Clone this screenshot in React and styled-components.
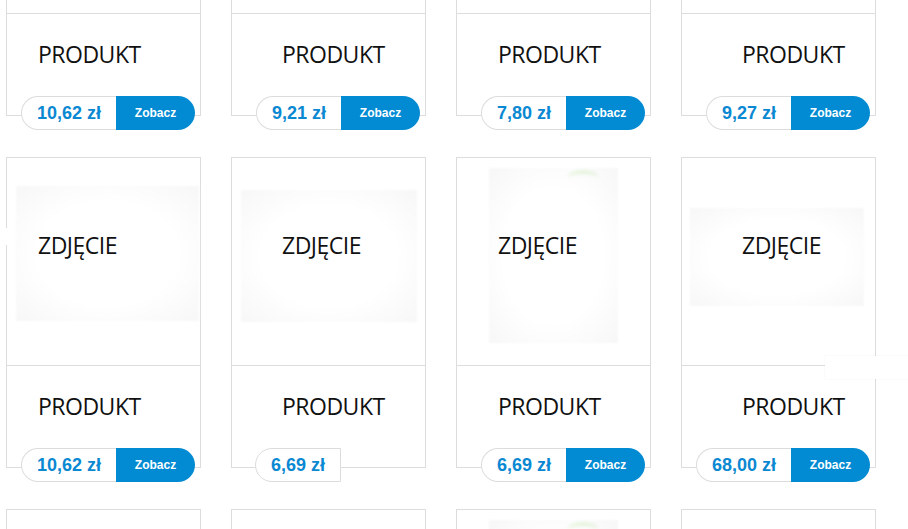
import React from "react";
import styled, { createGlobalStyle } from "styled-components";

const Global = createGlobalStyle`
  html, body { margin: 0; padding: 0; background: #fff; }
  body { overflow: hidden; width: 908px; height: 529px; position: relative; }
`;

const Page = styled.div`
  position: relative;
  width: 908px;
  height: 529px;
  overflow: hidden;
`;

const Grid = styled.div`
  display: grid;
  grid-template-columns: repeat(4, 195px);
  column-gap: 30px;
  row-gap: 41px;
  padding-left: 6px;
  margin-top: -195px;
`;

const Card = styled.div`
  display: flex;
  flex-direction: column;
  width: 195px;
  height: 311px;
  box-sizing: border-box;
  border: 1px solid #dddddd;
  background: #fff;
`;

const ImageArea = styled.div`
  position: relative;
  flex: 0 0 208px;
  height: 208px;
  box-sizing: border-box;
  border-bottom: 1px solid #dddddd;
  padding: 72px 0 0 ${(p) => p.$indent}px;
`;

const Photo = styled.div`
  position: absolute;
  left: ${(p) => p.$x}px;
  top: ${(p) => p.$y}px;
  width: ${(p) => p.$w}px;
  height: ${(p) => p.$h}px;
  background: radial-gradient(ellipse at center, #ffffff 55%, #f6f7f6 100%);
  filter: blur(1px);
`;

const Leaf = styled.div`
  position: absolute;
  right: 20px;
  top: 3px;
  width: 30px;
  height: 12px;
  border-radius: 50% 50% 0 0;
  border-top: 2px solid rgba(160, 220, 120, 0.45);
  filter: blur(1.5px);
`;

const Label = styled.div`
  position: relative;
  font-family: "Open Sans", "Noto Sans", sans-serif;
  font-size: 23px;
  line-height: 31px;
  letter-spacing: -0.5px;
  color: #111;
`;

const Info = styled.div`
  position: relative;
  flex: 1;
  padding: 25px 0 0 ${(p) => p.$indent}px;
`;

const PriceRow = styled.div`
  position: absolute;
  left: 0;
  right: 5px;
  bottom: -15px;
  display: grid;
  grid-template-columns: 1fr 79px;
  height: 34px;
`;

const PriceBox = styled.div`
  justify-self: end;
  display: flex;
  align-items: center;
  height: 34px;
  box-sizing: border-box;
  padding: 0 15px;
  border: 1px solid #dcdcdc;
  border-right: ${(p) => (p.$alone ? "1px solid #dcdcdc" : "none")};
  border-radius: 17px 0 0 17px;
  background: #fff;
  font-family: "Liberation Sans", Arial, sans-serif;
  font-weight: 700;
  font-size: 18px;
  color: #0b88d2;
  white-space: nowrap;
`;

const Button = styled.div`
  display: flex;
  align-items: center;
  justify-content: center;
  height: 34px;
  background: #028bd3;
  border-radius: 0 17px 17px 0;
  color: #fff;
  font-family: "Liberation Sans", Arial, sans-serif;
  font-weight: 700;
  font-size: 12px;
`;

const Patch = styled.div`
  position: absolute;
  left: ${(p) => p.$x}px;
  top: ${(p) => p.$y}px;
  width: ${(p) => p.$w}px;
  height: ${(p) => p.$h}px;
  background: #fff;
  box-shadow: ${(p) => (p.$shadow ? "0 0 1px rgba(0,0,0,0.1)" : "none")};
`;

const indents = [31, 50, 41, 60];
const photos = [
  { x: 9, y: 28, w: 183, h: 135 },
  { x: 9, y: 32, w: 176, h: 132 },
  { x: 32, y: 10, w: 129, h: 175 },
  { x: 8, y: 50, w: 174, h: 98 },
];

const rows = [
  [{ p: "10,62 zł" }, { p: "9,21 zł" }, { p: "7,80 zł" }, { p: "9,27 zł" }],
  [{ p: "10,62 zł" }, { p: "6,69 zł", noBtn: true }, { p: "6,69 zł" }, { p: "68,00 zł" }],
  [{ p: "10,62 zł" }, { p: "9,21 zł" }, { p: "7,80 zł" }, { p: "9,27 zł" }],
];

function ProductCard({ col, price, noBtn }) {
  const ph = photos[col];
  return (
    <Card>
      <ImageArea $indent={indents[col]}>
        <Photo $x={ph.x} $y={ph.y} $w={ph.w} $h={ph.h}>
          {col === 2 && <Leaf />}
        </Photo>
        <Label>ZDJĘCIE</Label>
      </ImageArea>
      <Info $indent={indents[col]}>
        <Label>PRODUKT</Label>
        <PriceRow>
          <PriceBox $alone={noBtn}>{price}</PriceBox>
          {noBtn ? <span /> : <Button>Zobacz</Button>}
        </PriceRow>
      </Info>
    </Card>
  );
}

export default function App() {
  return (
    <Page>
      <Global />
      <Grid>
        {rows.map((row, r) =>
          row.map((c, i) => (
            <ProductCard key={`${r}-${i}`} col={i} price={c.p} noBtn={c.noBtn} />
          ))
        )}
      </Grid>
      <Patch $x={0} $y={228} $w={8} $h={17} />
      <Patch $x={825} $y={356} $w={90} $h={23} $shadow />
    </Page>
  );
}
